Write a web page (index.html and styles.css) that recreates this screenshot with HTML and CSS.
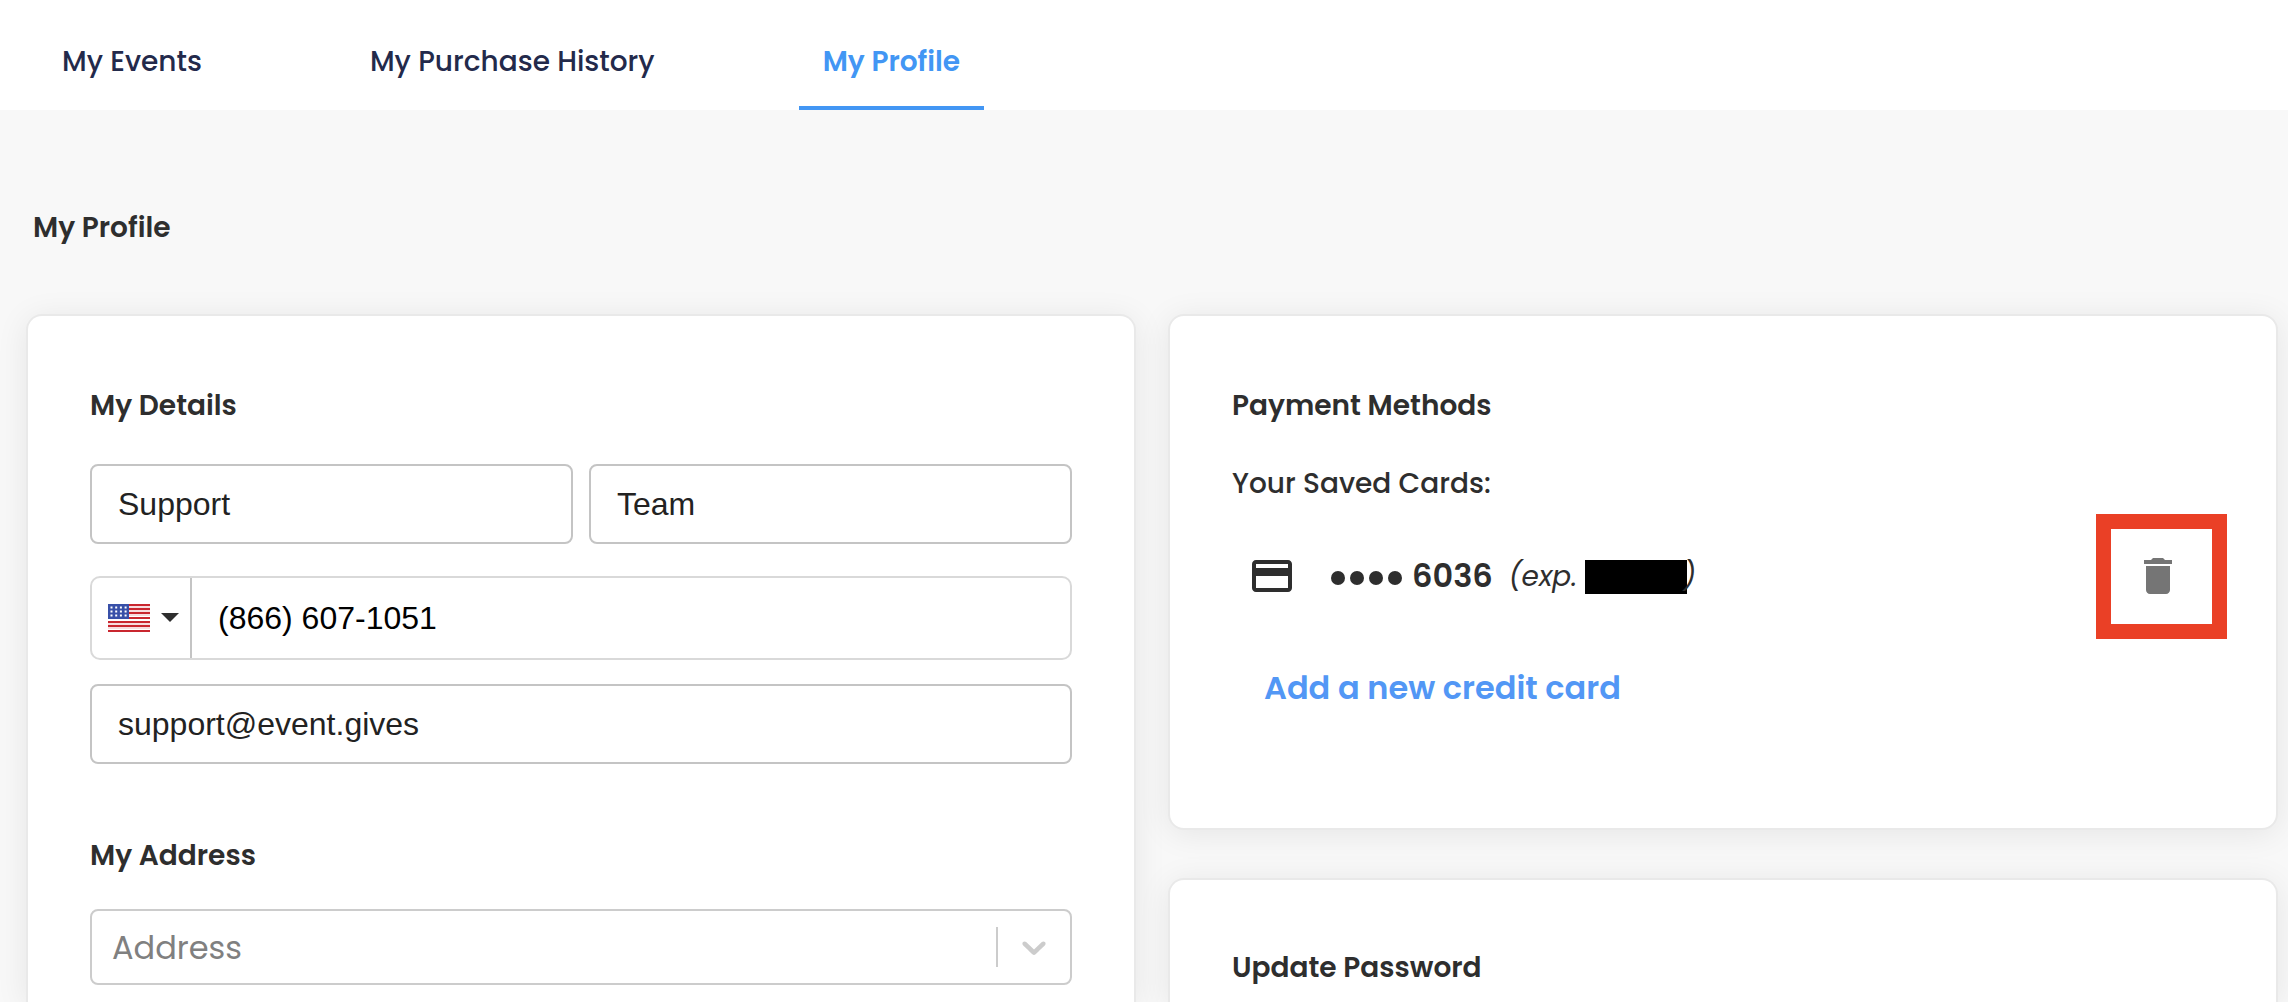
FILE: index.html
```html
<!DOCTYPE html>
<html lang="en">

<head>
    <meta charset="UTF-8">
    <meta name="viewport" content="width=device-width, initial-scale=1.0">
    <title>My Profile</title>
    <link rel="stylesheet" href="styles.css">
</head>

<body>
    <nav class="tabs">
        <a class="tab" href="#events">My Events</a>
        <a class="tab" href="#history">My Purchase History</a>
        <a class="tab active" href="#profile" aria-current="page">My Profile</a>
    </nav>

    <main class="page">
        <h1>My Profile</h1>

        <div class="columns">
            <!-- Left column - details and address -->
            <form class="card details">
                <h2>My Details</h2>
                <div class="name-row">
                    <input class="field" type="text" aria-label="First name" value="Support">
                    <input class="field" type="text" aria-label="Last name" value="Team">
                </div>
                <div class="phone">
                    <button class="country" type="button" aria-label="Country: United States">
                        <svg class="flag" viewBox="0 0 42 28" aria-hidden="true">
                            <rect width="42" height="28" fill="#fff" />
                            <path d="M0 1h42M0 5h42M0 9h42M0 14h42M0 18h42M0 22h42M0 27h42" stroke="#c9262f" stroke-width="2" />
                            <path d="M0 3h42M0 7h42M0 11h42M0 20h42M0 24h42" stroke="#f0b9be" stroke-width="1" />
                            <rect width="21" height="15" fill="#3850a8" />
                            <path d="M2.500 3.500h17M2.500 7.500h17M2.500 11.500h17" stroke="#fff" stroke-width="2" stroke-dasharray="2 2.700" />
                        </svg>
                        <svg class="caret" viewBox="0 0 18 10" aria-hidden="true">
                            <path d="M0 0h18l-9 9z" fill="#2e2e2e" />
                        </svg>
                    </button>
                    <input class="phone-input" type="tel" aria-label="Phone" value="(866) 607-1051">
                </div>
                <input class="field" type="email" aria-label="Email" value="support@event.gives">

                <h2 class="address-title">My Address</h2>
                <div class="select-box">
                    <select aria-label="Address">
                        <option>Address</option>
                    </select>
                    <span class="separator"></span>
                    <svg class="chevron" viewBox="0 0 20 20" aria-hidden="true">
                        <path d="M4.516 7.548c0.436-0.446 1.043-0.481 1.576 0l3.908 3.747 3.908-3.747c0.533-0.481 1.141-0.446 1.574 0 0.436 0.445 0.408 1.197 0 1.615-0.406 0.418-4.695 4.502-4.695 4.502-0.217 0.223-0.502 0.335-0.787 0.335s-0.570-0.112-0.789-0.335c0 0-4.287-4.084-4.695-4.502s-0.436-1.170 0-1.615z" fill="#ccc" />
                    </svg>
                </div>
            </form>

            <!-- Right column - cards and password -->
            <div class="side">
                <section class="card payments">
                    <h2>Payment Methods</h2>
                    <p class="saved-label">Your Saved Cards:</p>
                    <div class="saved-card">
                        <svg class="icon" viewBox="0 0 24 24" aria-hidden="true">
                            <path d="M20 4H4c-1.110 0-1.990.89-1.990 2L2 18c0 1.110.89 2 2 2h16c1.110 0 2-.89 2-2V6c0-1.110-.89-2-2-2zm0 14H4v-6h16v6zm0-10H4V6h16v2z" fill="#2e2e2e" />
                        </svg>
                        <span class="dots"><i></i><i></i><i></i><i></i></span>
                        <span class="number">6036</span>
                        <span class="expiry">(exp. <span class="redacted"></span>)</span>
                        <button class="delete" type="button" aria-label="Delete card">
                            <svg class="icon" viewBox="0 0 24 24" aria-hidden="true">
                                <path d="M6 19c0 1.100.9 2 2 2h8c1.100 0 2-.9 2-2V7H6v12zM19 4h-3.500l-1-1h-5l-1 1H5v2h14V4z" fill="#757575" />
                            </svg>
                        </button>
                    </div>
                    <button class="add-card" type="button">Add a new credit card</button>
                </section>

                <section class="card password">
                    <h2>Update Password</h2>
                </section>
            </div>
        </div>
    </main>
</body>

</html>
```
FILE: styles.css
```css
* {
    box-sizing: border-box;
}

body {
    margin: 0;
    height: 100vh;
    overflow: hidden;
    display: flex;
    flex-direction: column;
    background-color: #f8f8f8;
    color: #2e2e2e;
    font-family: Poppins, Inter, sans-serif;
    font-size: 28px;
    line-height: 42px;
}

h1,
h2,
p {
    margin: 0;
    font-size: 28px;
}

h1,
h2 {
    font-weight: 600;
}

button {
    padding: 0;
    border: none;
    background: none;
    font-family: inherit;
    cursor: pointer;
}

/* Tabs */
.tabs {
    display: flex;
    flex-shrink: 0;
    gap: 120px;
    height: 110px;
    padding-left: 38px;
    background-color: #fff;
}

.tab {
    padding: 41px 24px 0;
    border-bottom: 4px solid transparent;
    color: #232a4b;
    font-weight: 500;
    text-decoration: none;
}

.tab.active {
    border-color: #4296f4;
    color: #4296f4;
    font-weight: 600;
}

/* Page */
.page {
    flex: 1;
    display: flex;
    flex-direction: column;
    padding: 97px 10px 0 26px;
}

h1 {
    padding-left: 7px;
    margin-bottom: 65px;
}

.columns {
    flex: 1;
    display: grid;
    grid-template-columns: 1fr 1fr;
    gap: 32px;
}

.side {
    display: flex;
    flex-direction: column;
    gap: 48px;
}

.card {
    padding: 69px 62px;
    border: 2px solid #e9e9e9;
    border-radius: 16px;
    background-color: #fff;
    box-shadow: 0 4px 32px rgba(0, 0, 0, 0.08);
}

.details,
.password {
    padding-bottom: 0;
    border-bottom: none;
    border-bottom-left-radius: 0;
    border-bottom-right-radius: 0;
}

.password {
    flex: 1;
    padding-top: 67px;
}

/* Details form */
.details {
    display: flex;
    flex-direction: column;
}

.name-row {
    display: flex;
    gap: 16px;
    margin: 37px 0 32px;
}

.field {
    width: 100%;
    height: 80px;
    padding: 0 26px;
    border: 2px solid #c4c4c4;
    border-radius: 8px;
    color: #222;
    font-family: "Liberation Sans", sans-serif;
    font-size: 32px;
}

.phone {
    display: flex;
    height: 84px;
    margin-bottom: 24px;
    border: 2px solid #d9d9d9;
    border-radius: 10px;
}

.country {
    display: flex;
    align-items: center;
    gap: 11px;
    width: 100px;
    padding-left: 16px;
    border-right: 2px solid #c4c4c4;
}

.flag {
    width: 42px;
    height: 28px;
}

.caret {
    width: 18px;
    height: 10px;
}

.phone-input {
    flex: 1;
    padding: 0 26px;
    border: none;
    background: none;
    color: #000;
    font-family: "Liberation Sans", sans-serif;
    font-size: 32px;
}

.address-title {
    margin: 71px 0 32px;
}

.select-box {
    display: flex;
    align-items: center;
    height: 76px;
    padding-right: 16px;
    border: 2px solid #ccc;
    border-radius: 8px;
}

.select-box select {
    flex: 1;
    height: 72px;
    padding: 0 20px;
    border: none;
    background: none;
    appearance: none;
    color: #808080;
    font-family: inherit;
    font-size: 32px;
}

.separator {
    width: 2px;
    height: 40px;
    background-color: #ccc;
}

.chevron {
    width: 40px;
    height: 40px;
    margin-left: 16px;
}

/* Payment methods */
.payments {
    height: 516px;
}

.saved-label {
    margin: 36px 0 23px;
    font-weight: 500;
}

.saved-card {
    display: flex;
    align-items: center;
    height: 96px;
    padding: 0 8px 0 16px;
}

.icon {
    display: block;
    width: 48px;
    height: 48px;
}

.dots {
    display: flex;
    gap: 5px;
    margin: 4px 10px 0 35px;
}

.dots i {
    width: 14px;
    height: 14px;
    border-radius: 50%;
    background-color: #2e2e2e;
}

.number {
    font-size: 32px;
    font-weight: 600;
}

.expiry {
    display: flex;
    align-items: center;
    margin: 2px 0 0 16px;
    font-style: italic;
    font-weight: 400;
}

.redacted {
    width: 102px;
    height: 34px;
    margin: 0 -4px 0 8px;
    background-color: #000;
}

.delete {
    position: relative;
    margin-left: auto;
    padding: 24px;
}

/* Highlight frame around the delete button */
.delete::after {
    content: "";
    position: absolute;
    inset: -14px -21px -15px -14px;
    border: 15px solid #ea4026;
}

.add-card {
    margin: 40px 0 0 32px;
    color: #5297f5;
    font-size: 32px;
    font-weight: 600;
    line-height: 48px;
}
```
